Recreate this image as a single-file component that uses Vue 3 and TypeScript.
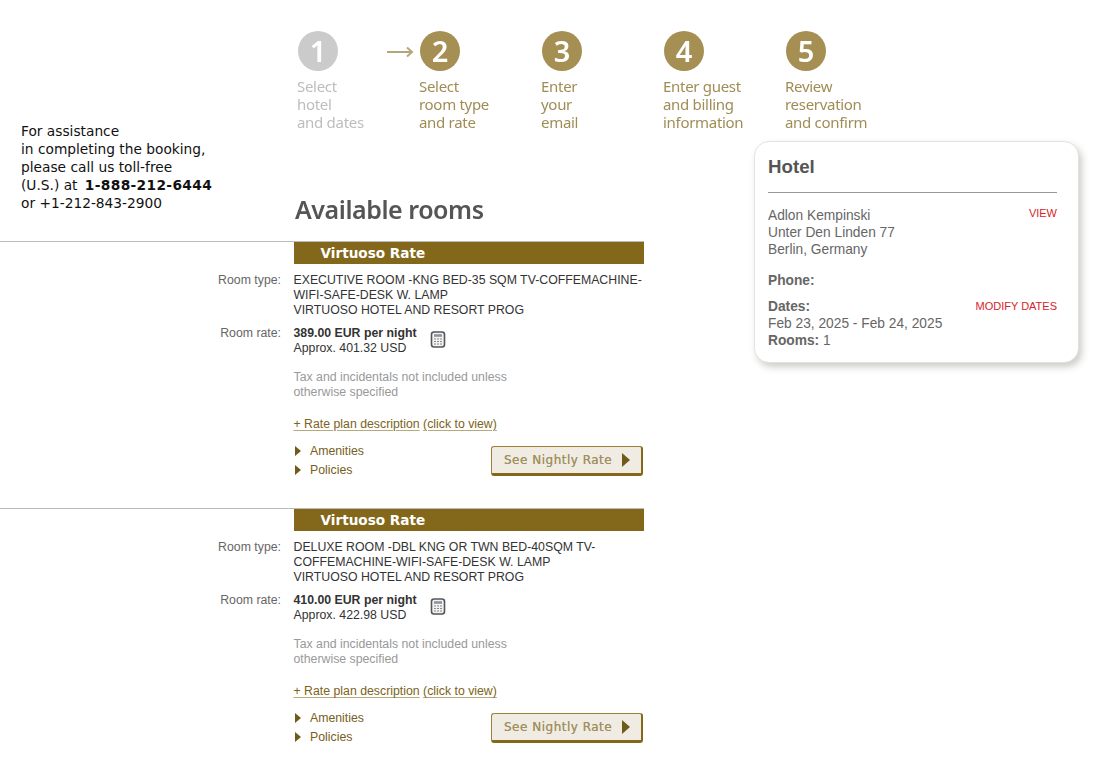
<script setup lang="ts">
interface Step { num: number; lines: string[]; done?: boolean; current?: boolean }
interface Rate { room: string[]; price: string; approx: string }

const steps: Step[] = [
  { num: 1, lines: ['Select', 'hotel', 'and dates'], done: true },
  { num: 2, lines: ['Select', 'room type', 'and rate'], current: true },
  { num: 3, lines: ['Enter', 'your', 'email'] },
  { num: 4, lines: ['Enter guest', 'and billing', 'information'] },
  { num: 5, lines: ['Review', 'reservation', 'and confirm'] },
]

const rates: Rate[] = [
  {
    room: ['EXECUTIVE ROOM -KNG BED-35 SQM TV-COFFEMACHINE-', 'WIFI-SAFE-DESK W. LAMP', 'VIRTUOSO HOTEL AND RESORT PROG'],
    price: '389.00 EUR per night',
    approx: 'Approx. 401.32 USD',
  },
  {
    room: ['DELUXE ROOM -DBL KNG OR TWN BED-40SQM TV-', 'COFFEMACHINE-WIFI-SAFE-DESK W. LAMP', 'VIRTUOSO HOTEL AND RESORT PROG'],
    price: '410.00 EUR per night',
    approx: 'Approx. 422.98 USD',
  },
]
</script>

<template>
  <div class="page">
    <div class="assist">
      For assistance<br />
      in completing the booking,<br />
      please call us toll-free<br />
      (U.S.) at <strong>1-888-212-6444</strong><br />
      or +1-212-843-2900
    </div>

    <ol class="steps">
      <li v-for="s in steps" :key="s.num" class="step" :class="{ done: s.done }">
        <svg v-if="s.current" class="arrow" width="28" height="12" viewBox="0 0 28 12" fill="none" stroke="#b5a67a" stroke-width="2"><path d="M1 6h25M21 1.5 26 6l-5 4.5" /></svg>
        <span class="circle">{{ s.num }}</span>
        <span v-for="l in s.lines" :key="l" class="step-line">{{ l }}</span>
      </li>
    </ol>

    <h1 class="title">Available rooms</h1>

    <aside class="card">
      <h2>Hotel</h2>
      <div class="card-row first">
        <div>Adlon Kempinski<br />Unter Den Linden 77<br />Berlin, Germany</div>
        <a class="red">VIEW</a>
      </div>
      <div class="phone"><b>Phone:</b></div>
      <div class="card-row dates">
        <div><b>Dates:</b><br />Feb 23, 2025 - Feb 24, 2025<br /><b>Rooms:</b> 1</div>
        <a class="red">MODIFY DATES</a>
      </div>
    </aside>

    <div class="rates">
      <section v-for="r in rates" :key="r.price" class="rate">
        <div class="banner">Virtuoso Rate</div>
        <div class="row room-row">
          <span class="label">Room type:</span>
          <div class="value"><div v-for="l in r.room" :key="l">{{ l }}</div></div>
        </div>
        <div class="row price-row">
          <span class="label">Room rate:</span>
          <div class="value">
            <strong>{{ r.price }}</strong><br />{{ r.approx }}
          </div>
          <svg class="calc" width="16" height="17" viewBox="0 0 16 17" fill="none">
            <rect x="1.5" y="1" width="13" height="15" rx="2.5" fill="#f2f2f2" stroke="#555" stroke-width="1.6" />
            <rect x="4" y="3.2" width="8" height="2.6" fill="#8a94a4" />
            <path d="M4 8h2M7 8h2M10 8h2M4 10.5h2M7 10.5h2M10 10.5h2M4 13h2M7 13h2M10 13h2" stroke="#888" />
          </svg>
        </div>
        <p class="tax">Tax and incidentals not included unless<br />otherwise specified</p>
        <div class="plan"><a><u>+ Rate plan description</u> <u>(click to view)</u></a></div>
        <div class="foot">
          <ul class="toggles">
            <li><i class="tri"></i>Amenities</li>
            <li><i class="tri"></i>Policies</li>
          </ul>
          <button type="button" class="nightly">See Nightly Rate<i class="tri big"></i></button>
        </div>
      </section>
    </div>
  </div>
</template>

<style scoped>
.page {
  display: grid;
  grid-template-columns: 293.5px 350.5px 1fr;
  grid-template-rows: 141px 100px auto;
  font-family: "Liberation Sans", Arial, sans-serif;
  font-size: 12.3px;
  color: #333;
  width: 1100px;
}

.assist {
  grid-column: 1;
  grid-row: 1 / 3;
  padding: 123px 0 0 21px;
  font-family: "DejaVu Sans", Verdana, sans-serif;
  font-size: 13.75px;
  line-height: 17.9px;
  color: #111;
}
.assist strong { margin-left: 3px; letter-spacing: .35px; }

.steps {
  grid-column: 2 / 4;
  grid-row: 1;
  display: flex;
  list-style: none;
  margin: 0;
  padding: 31px 0 0 3.5px;
  font-family: "Noto Sans", sans-serif;
  font-size: 15px;
  letter-spacing: -0.3px;
  line-height: 18px;
  color: #a08c55;
  filter: blur(0.45px);
}
.step { position: relative; width: 122px; display: flex; flex-direction: column; }
.step.done { color: #bdbdbd; }
.circle {
  width: 40px; height: 40px; margin: 0 0 6px 1px;
  border-radius: 50%;
  background: #a68f52;
  color: #fff;
  font-size: 29px; font-weight: 600; line-height: 40px; text-align: center;
}
.done .circle { background: #cbcbcb; }
.arrow { position: absolute; left: -33px; top: 15px; }

.title {
  grid-column: 2;
  grid-row: 2;
  margin: 0;
  padding: 50px 0 0 1.5px;
  font-family: "Noto Sans", sans-serif;
  font-size: 25px;
  font-weight: 600;
  letter-spacing: -0.45px;
  line-height: 36px;
  color: #555;
  filter: blur(0.3px);
}

.card {
  grid-column: 3;
  grid-row: 2 / 4;
  align-self: start;
  box-sizing: border-box;
  width: 325px;
  height: 222px;
  margin-left: 110px;
  padding: 13px 21px 0 13px;
  background: #fff;
  border: 1px solid #e2e2de;
  border-radius: 15px;
  box-shadow: 3px 4px 7px rgba(90, 90, 80, .3);
  font-size: 13.75px;
  line-height: 17px;
  color: #666;
}
.card h2 {
  margin: 0;
  padding-bottom: 14px;
  border-bottom: 1px solid #999;
  font-size: 18.7px;
  line-height: 23px;
  color: #555;
}
.card-row { display: flex; justify-content: space-between; align-items: flex-start; }
.card-row.first { margin-top: 14px; }
.phone { margin-top: 14px; }
.dates { margin-top: 9px; }
.red { color: #d8232a; font-size: 11px; line-height: 15px; }
.first .red { margin-top: -1px; }
.dates .red { margin-top: 1px; }

.rates { grid-column: 1 / 3; grid-row: 3; }
.rate {
  height: 267.2px;
  box-sizing: border-box;
  border-top: 1px solid #bbb;
  margin: 0;
}
.banner {
  margin-left: 293.5px;
  height: 22px;
  padding-left: 27px;
  background: #83681c;
  color: #fff;
  font-family: "DejaVu Sans", Verdana, sans-serif;
  font-size: 13.6px;
  font-weight: 700;
  line-height: 23px;
}
.row { display: flex; line-height: 15px; color: #333; }
.label { width: 281px; text-align: right; margin-right: 12.5px; color: #666; flex-shrink: 0; }
.room-row { margin-top: 8.5px; }
.price-row { margin-top: 8px; }
.calc { margin: 5px 0 0 13px; }
.tax { margin: 14.5px 0 0 293.5px; line-height: 15px; color: #999; }
.plan { margin: 17px 0 0 293.5px; line-height: 15px; color: #7b6420; }
.plan u { text-decoration-color: #b9a878; text-underline-offset: 2px; }
.foot { display: flex; justify-content: space-between; align-items: flex-start; margin: 9.7px 0 0 293.5px; width: 349.5px; }
.toggles { list-style: none; margin: 0; padding: 0; color: #77601c; line-height: 19px; }
.toggles li { display: flex; align-items: center; }
.tri {
  display: inline-block;
  width: 0; height: 0;
  margin: 0 9px 0 1.5px;
  border-left: 6px solid #6f5a1a;
  border-top: 5px solid transparent;
  border-bottom: 5px solid transparent;
}
.nightly {
  display: flex; align-items: center; justify-content: space-between;
  box-sizing: border-box;
  width: 152px; height: 30px;
  margin-top: 4px;
  padding: 0 11px 0 12px;
  background: #f0ece4;
  border: 1px solid #9b8238;
  border-bottom: 3px solid #83681c;
  border-right: 2px solid #83681c;
  border-radius: 3px;
  color: #a1915f;
  font-family: "DejaVu Sans", Verdana, sans-serif;
  font-size: 12px;
  letter-spacing: .5px;
  text-shadow: 0 0 .3px #a1915f;
  cursor: pointer;
}
.tri.big { margin: 0; border-left-width: 8px; border-top-width: 7px; border-bottom-width: 7px; }
</style>

<style>
html, body { background: #fff; }
</style>
